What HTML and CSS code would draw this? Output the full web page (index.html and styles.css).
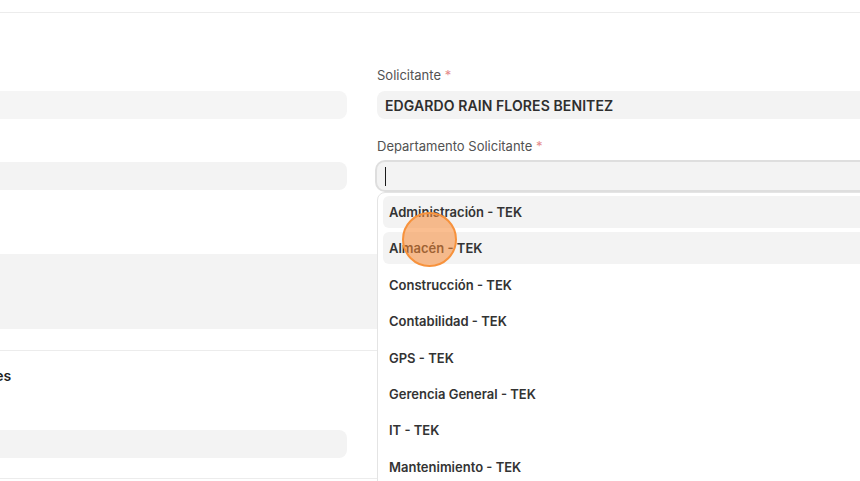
FILE: index.html
```html
<!DOCTYPE html>
<html lang="es">
<head>
<meta charset="utf-8">
<link rel="stylesheet" href="styles.css">
</head>
<body>
<div class="topbar"></div>
<div class="page">
  <div class="section first">
    <div class="cols">
      <div class="col">
        <div class="field">
          <div class="label"></div>
          <div class="control light"></div>
        </div>
        <div class="field">
          <div class="label"></div>
          <div class="control"></div>
        </div>
      </div>
      <div class="col">
        <div class="field">
          <div class="label">Solicitante <span class="req">*</span></div>
          <div class="control value">EDGARDO RAIN FLORES BENITEZ</div>
        </div>
        <div class="field">
          <div class="label">Departamento Solicitante <span class="req">*</span></div>
          <div class="awesomplete">
            <div class="control focused"><span class="caret"></span></div>
            <ul class="dropdown">
              <li class="item hl">Administración - TEK</li>
              <li class="item hl">Almacén - TEK</li>
              <li class="item">Construcción - TEK</li>
              <li class="item">Contabilidad - TEK</li>
              <li class="item">GPS - TEK</li>
              <li class="item">Gerencia General - TEK</li>
              <li class="item">IT - TEK</li>
              <li class="item">Mantenimiento - TEK</li>
            </ul>
          </div>
        </div>
      </div>
    </div>
    <div class="field wide">
      <div class="label"></div>
      <div class="textarea"></div>
    </div>
  </div>
  <div class="section second">
    <div class="section-head">Observaciones</div>
    <div class="cols">
      <div class="col">
        <div class="field">
          <div class="label"></div>
          <div class="control"></div>
        </div>
      </div>
      <div class="col"></div>
    </div>
  </div>
</div>
<div class="click-dot"></div>
</body>
</html>
```
FILE: styles.css
```css
html, body {
  margin: 0;
  padding: 0;
  background: #ffffff;
  overflow: hidden;
  width: 860px;
  height: 481px;
  font-family: Inter, "Noto Sans", sans-serif;
  color: #383838;
}

.topbar {
  height: 12px;
  border-bottom: 1px solid #ececec;
}

.page {
  margin-left: -91px;
  width: 1000px;
}

.section {
  border-bottom: 1px solid #ececec;
}

.section.first {
  padding-top: 54px;
  padding-bottom: 21px;
}

.section.second {
  padding-top: 16px;
  padding-bottom: 20px;
}

.cols {
  display: grid;
  grid-template-columns: 438px 530px;
  column-gap: 30px;
}

.col {
  display: flex;
  flex-direction: column;
  gap: 19px;
}

.field {
  display: flex;
  flex-direction: column;
}

.label {
  font-size: 13px;
  line-height: 16px;
  height: 16px;
  color: #525252;
  margin-bottom: 8px;
  white-space: nowrap;
}

.req {
  color: #e58a8a;
}

.control {
  height: 28px;
  border-radius: 8px;
  background: #f3f3f3;
  box-sizing: border-box;
  padding: 0 8px;
  font-size: 13px;
  line-height: 28px;
}

.control.light {
  background: #f5f5f5;
}

.control.value {
  font-size: 14px;
  line-height: 29px;
  font-weight: 600;
  color: #2e2e2e;
  letter-spacing: 0.1px;
}

.awesomplete {
  position: relative;
}

.control.focused {
  box-shadow: 0 0 0 2px #dedede;
  display: flex;
  align-items: center;
}

.caret {
  display: block;
  width: 1px;
  height: 19px;
  background: #1a1a1a;
}

.dropdown {
  position: absolute;
  left: 0;
  top: 30px;
  width: 100%;
  margin: 0;
  padding: 3px 5px;
  list-style: none;
  background: #ffffff;
  border: 1px solid #e4e4e4;
  border-radius: 8px;
  box-sizing: border-box;
  z-index: 5;
  height: 300px;
}

.item {
  height: 32px;
  margin-bottom: 4.4px;
  padding: 0 6px;
  border-radius: 6px;
  font-size: 13px;
  line-height: 32px;
  font-weight: 600;
  color: #333333;
  white-space: nowrap;
}

.item.hl {
  background: #f3f3f3;
}

.field.wide {
  margin-top: 44px;
}

.field.wide .label {
  margin-bottom: 4px;
}

.textarea {
  height: 75px;
  background: #f3f3f3;
  border-radius: 8px;
}

.section-head {
  font-size: 14px;
  line-height: 18px;
  font-weight: 600;
  color: #1f1f1f;
  margin-bottom: 21px;
}

.click-dot {
  position: absolute;
  left: 402px;
  top: 212px;
  width: 51px;
  height: 51px;
  border-radius: 50%;
  border: 2px solid #f7923c;
  background: rgba(245, 137, 52, 0.55);
  z-index: 10;
}
```
